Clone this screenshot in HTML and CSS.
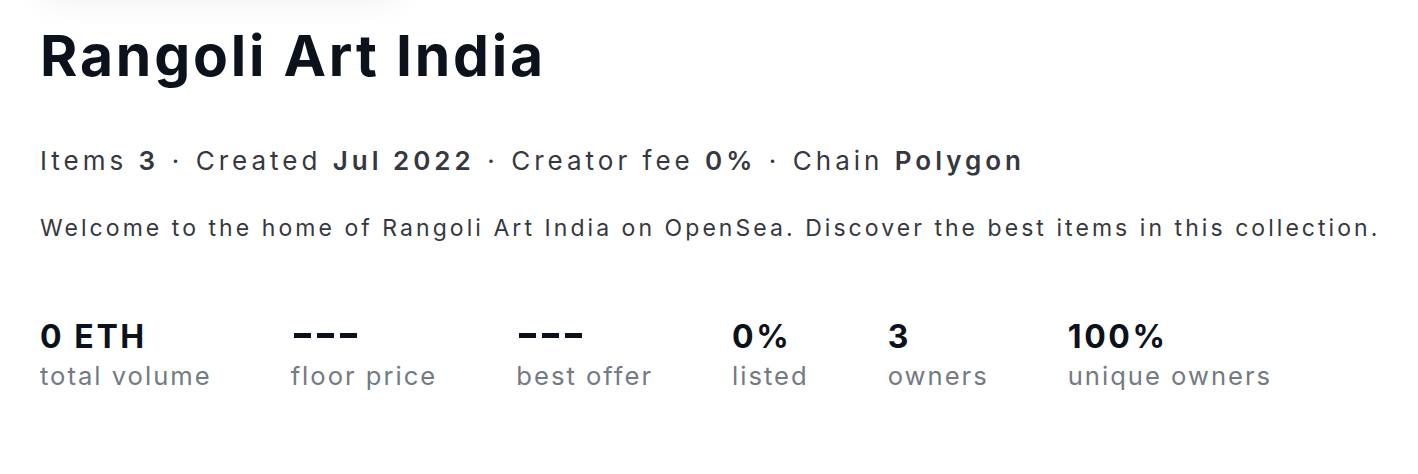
FILE: index.html
```html
<!DOCTYPE html>
<html lang="en">
<head>
<meta charset="utf-8">
<title>Rangoli Art India</title>
<link rel="stylesheet" href="styles.css">
</head>
<body>
<div class="shadow-card"></div>
<main class="collection">
  <h1 class="title">Rangoli Art India</h1>
  <div class="meta">
    <span>Items <b>3</b></span>
    <span class="dot">·</span>
    <span>Created <b>Jul 2022</b></span>
    <span class="dot">·</span>
    <span>Creator fee <b>0%</b></span>
    <span class="dot">·</span>
    <span>Chain <b>Polygon</b></span>
  </div>
  <p class="desc">Welcome to the home of Rangoli Art India on OpenSea. Discover the best items in this collection.</p>
  <div class="stats">
    <div class="stat"><div class="value">0 ETH</div><div class="label">total volume</div></div>
    <div class="stat"><div class="value dash"><i></i><i></i><i></i></div><div class="label">floor price</div></div>
    <div class="stat"><div class="value dash"><i></i><i></i><i></i></div><div class="label">best offer</div></div>
    <div class="stat"><div class="value">0%</div><div class="label">listed</div></div>
    <div class="stat"><div class="value">3</div><div class="label">owners</div></div>
    <div class="stat"><div class="value">100%</div><div class="label">unique owners</div></div>
  </div>
</main>
</body>
</html>
```
FILE: styles.css
```css
* { box-sizing: border-box; }
html, body { margin: 0; padding: 0; background: #fff; }
body {
  font-family: Inter, "Noto Sans", sans-serif;
  position: relative;
  overflow: hidden;
  height: 474px;
}
.shadow-card {
  position: absolute;
  top: -64px;
  left: 40px;
  width: 360px;
  height: 60px;
  border-radius: 16px;
  box-shadow: 0 6px 34px rgba(0,0,0,0.06);
}
.collection {
  padding: 24px 40px 0 40px;
}
.title {
  margin: 0;
  font-size: 57px;
  line-height: 64px;
  font-weight: 700;
  color: #0b121c;
  letter-spacing: 2.8px;
}
.meta {
  margin-top: 55px;
  display: flex;
  align-items: baseline;
  gap: 12.5px;
  font-size: 26px;
  line-height: 36px;
  letter-spacing: 4px;
  color: #353840;
  white-space: nowrap;
}
.meta b { font-weight: 600; }
.desc {
  margin: 33px 0 0;
  font-size: 23px;
  line-height: 32px;
  letter-spacing: 3.05px;
  color: #353840;
  white-space: nowrap;
}
.stats {
  margin-top: 73px;
  display: flex;
  gap: 79px;
}
.stat { display: flex; flex-direction: column; }
.value {
  font-size: 32px;
  line-height: 40px;
  font-weight: 700;
  letter-spacing: 2.6px;
  color: #0b121c;
}
.value.dash {
  display: flex;
  gap: 6px;
  align-items: flex-start;
  height: 40px;
  padding: 16px 0 0 3px;
}
.value.dash i {
  display: block;
  width: 17px;
  height: 4.5px;
  background: #0b121c;
}
.label {
  font-size: 25.6px;
  line-height: 38px;
  letter-spacing: 2px;
  color: #737a83;
  white-space: nowrap;
}
```
